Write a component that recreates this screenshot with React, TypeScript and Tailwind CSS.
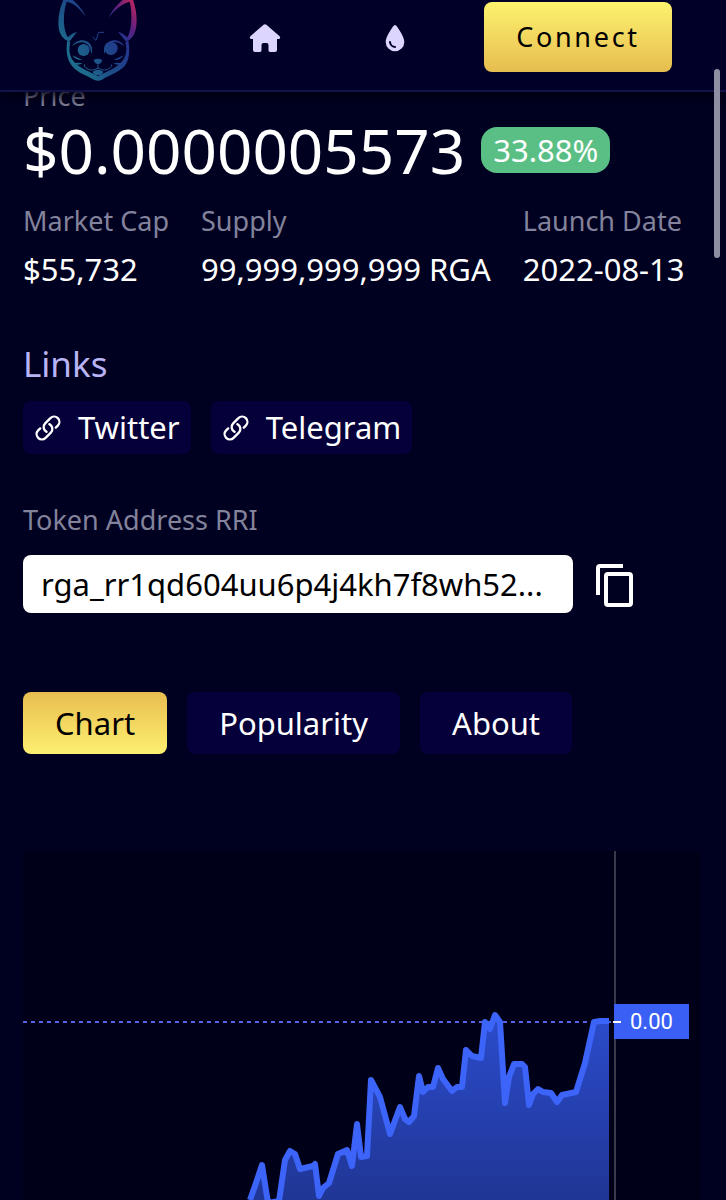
import { useState } from 'react'
import { HiOutlineLink } from 'react-icons/hi2'
import { IoWater } from 'react-icons/io5'

const stats = [
  { label: 'Market Cap', value: '$55,732' },
  { label: 'Supply', value: '99,999,999,999 RGA' },
  { label: 'Launch Date', value: '2022-08-13' },
]

const links = ['Twitter', 'Telegram']
const tabs = ['Chart', 'Popularity', 'About']

// x, y inside the 677 x 349 chart
const points = [
  [227, 349], [233, 332], [239, 314], [245, 352], [256, 350], [262, 309], [267, 300], [272, 303],
  [277, 318], [290, 315], [292, 313], [296, 345], [300, 337], [306, 332], [315, 303], [324, 299],
  [329, 315], [334, 273], [338, 306], [344, 305], [348, 229], [357, 246], [367, 283], [377, 256],
  [382, 268], [386, 271], [391, 265], [396, 225], [400, 241], [405, 236], [410, 236], [415, 217],
  [420, 228], [429, 240], [434, 236], [439, 236], [443, 199], [449, 205], [458, 207], [462, 171],
  [467, 178], [472, 164], [477, 171], [482, 252], [486, 226], [491, 213], [499, 213], [502, 216],
  [506, 254], [510, 243], [515, 238], [520, 241], [528, 242], [534, 251], [539, 244], [553, 241],
  [562, 212], [571, 171], [577, 170], [586, 170],
]

const linePoints = points.map((p) => p.join(',')).join(' ')

export default function App() {
  const [tab, setTab] = useState('Chart')

  return (
    <div className="relative min-h-screen overflow-hidden bg-[#000021] font-['Noto_Sans','Open_Sans',sans-serif] text-white">
      <Header />

      <main className="-mt-3.5 pr-[26px] pl-[23px]">
        <p className="text-[27px] leading-9 text-[#83839b]">Price</p>
        <div className="flex items-center gap-4">
          <h1 className="text-[62px] leading-[72px]">$0.0000005573</h1>
          <span className="rounded-2xl bg-[#5abf85] px-3 text-[31px] leading-[46px]">33.88%</span>
        </div>

        <dl className="mt-[17px] flex gap-8 whitespace-nowrap">
          {stats.map((s) => (
            <div key={s.label}>
              <dt className="text-[27px] leading-9 text-[#83839b]">{s.label}</dt>
              <dd className="mt-2.5 text-[31px] leading-10">{s.value}</dd>
            </div>
          ))}
        </dl>

        <h2 className="mt-[51px] text-[35px] leading-12 text-[#b8b4f5]">Links</h2>
        <div className="mt-[13px] flex gap-5">
          {links.map((name) => (
            <a
              key={name}
              href={`#${name.toLowerCase()}`}
              className="flex items-center gap-4 rounded-lg bg-[#05003a] px-[11px] text-[31px] leading-[53px]"
            >
              <HiOutlineLink size={28} strokeWidth={2} />
              {name}
            </a>
          ))}
        </div>

        <label htmlFor="rri" className="mt-12 block text-[27px] leading-9 text-[#83839b]">
          Token Address RRI
        </label>
        <div className="mt-[17px] flex items-center gap-5">
          <input
            id="rri"
            readOnly
            value="rga_rr1qd604uu6p4j4kh7f8wh52..."
            className="h-[58px] w-[550px] rounded-lg bg-white px-[18px] text-[31px] text-black"
          />
          <button type="button" aria-label="Copy address">
            <CopyIcon />
          </button>
        </div>

        <div className="mt-[79px] flex gap-5">
          {tabs.map((name) => (
            <button
              key={name}
              type="button"
              onClick={() => setTab(name)}
              className={
                name === tab
                  ? 'rounded-lg bg-gradient-to-b from-[#e8bd50] to-[#fdf070] px-8 text-[31px] leading-[62px] text-black'
                  : 'rounded-lg bg-[#05003a] px-8 text-[31px] leading-[62px]'
              }
            >
              {name}
            </button>
          ))}
        </div>

        <PriceChart />
      </main>

      <div className="absolute top-[69px] right-[6px] z-20 h-[189px] w-[6px] rounded-full bg-[#8f8fa3]" />
    </div>
  )
}

function Header() {
  return (
    <header className="relative z-10 flex h-[92px] items-start border-b-2 border-[#12124a] bg-[#000028] pl-[58px] shadow-[0_4px_12px_#000010]">
      <CatLogo />
      <nav className="ml-[62px] flex">
        <a href="#home" aria-label="Home" className="flex h-[76px] w-[130px] items-center justify-center text-[#dcd6ff]">
          <svg width="32" height="28" viewBox="0 0 32 28" fill="currentColor">
            <path d="M14.6 0.7Q16 -0.4 17.4 0.7L30.6 12.2Q32 14.5 30 15H28V26Q28 28 26 28H21Q19.5 28 19.5 26V21Q19.5 19 17.5 19H14.5Q12.5 19 12.5 21V26Q12.5 28 11 28H6Q4 28 4 26V15H2Q0 14.5 1.4 12.2Z" />
          </svg>
        </a>
        <a href="#faucet" aria-label="Faucet" className="flex h-[76px] w-[130px] items-center justify-center text-[#dcd6ff]">
          <svg width="20" height="28" viewBox="0 0 20 28">
            <path d="M10 1Q11 1 12 2.6C15.5 8 19.3 13.6 19.3 18A9.3 9.3 0 0 1 0.7 18C0.700 13.600 4.500 8 8 2.600Q9 1 10 1Z" fill="currentColor" />
            <path d="M5 18Q5.500 22.500 10 23" fill="none" stroke="#000028" strokeWidth="2" strokeLinecap="round" />
          </svg>
        </a>
      </nav>
      <button
        type="button"
        className="mt-[2px] ml-6 h-[70px] w-[188px] rounded-lg bg-gradient-to-b from-[#fdf26e] to-[#e6bd50] text-[27px] tracking-widest text-black"
      >
        Connect
      </button>
    </header>
  )
}

function CopyIcon() {
  return (
    <svg width="44" height="48" viewBox="0 0 44 48" fill="none" stroke="white" strokeWidth="4">
      <path d="M5 35V8Q5 6 7 6H30" />
      <rect x="13" y="14" width="25" height="31" rx="2" />
    </svg>
  )
}

function CatLogo() {
  return (
    <svg width="80" height="82" viewBox="54 0 240 246" fill="none" aria-label="Cat logo">
      <defs>
        <linearGradient id="cat" gradientUnits="userSpaceOnUse" x1="90" y1="160" x2="300" y2="10">
          <stop offset="0" stopColor="#1d6c8c" />
          <stop offset="0.3" stopColor="#1c4a88" />
          <stop offset="0.6" stopColor="#24348c" />
          <stop offset="0.75" stopColor="#5a2080" />
          <stop offset="0.95" stopColor="#b82560" />
        </linearGradient>
      </defs>
      <g fill="url(#cat)">
        <path d="M72 -6C56 30 50 72 60 98C67 115 79 122 89 124L111 96C97 99 88 108 84 112C69 91 68 40 80 5C104 10 122 28 139 53C125 23 103 0 83 -10Z" />
        <path d="M277 -6C291 30 294 72 284 98C277 115 266 122 257 124L234 95C249 99 257 108 262 112C275 91 278 40 269 5C245 12 225 28 206 53C220 23 244 0 265 -10Z" />
        <path d="M82 121L91 127C86 149 88 170 101 184C119 205 150 216 174 228C198 216 229 205 246 184C259 170 262 149 256 127L265 121C271 151 268 181 254 198C233 221 204 226 186 239Q174 245 162 239C140 226 114 220 96 198C80 178 77 150 82 121Z" />
        <circle cx="131" cy="150" r="18" />
        <circle cx="213" cy="145" r="20" />
        <path d="M97 138C106 121 132 114 148 129C158 139 158 153 154 163C153 147 148 133 134 128C120 125 107 130 97 138Z" />
        <path d="M253 138C244 121 218 114 202 129C192 139 190 153 194 163C195 147 202 133 216 126C230 125 243 130 253 138Z" />
        <path d="M161 180Q174 173 187 180Q185 190 174 193Q163 190 161 180Z" />
        <path d="M158 215Q174 204 190 215Q188 225 174 225Q160 225 158 215Z" />
        <path d="M97 166Q110 172 127 180Q107 182 97 166ZM101 190Q113 186 128 190Q113 198 101 190ZM251 166Q238 172 221 180Q241 182 251 166ZM247 190Q235 186 220 190Q235 198 247 190Z" />
      </g>
      <g stroke="url(#cat)" strokeWidth="3">
        <path d="M158 111L168 121L176 97H192" />
        <path d="M174 193V204Q153 217 137 203Q130 199 134 193M174 204Q195 217 211 203Q218 199 214 193" />
      </g>
    </svg>
  )
}

function PriceChart() {
  return (
    <svg
      className="mt-[97px] block w-full bg-[#000018]"
      viewBox="0 0 677 349"
      role="img"
      aria-label="Price chart"
    >
      <defs>
        <linearGradient id="area" gradientUnits="userSpaceOnUse" x1="0" y1="165" x2="0" y2="349">
          <stop offset="0" stopColor="#2b4bcb" />
          <stop offset="1" stopColor="#203695" />
        </linearGradient>
      </defs>
      <path d="M0 171H591" stroke="#5461e0" strokeWidth="2" strokeDasharray="4 4" />
      <polygon points={`${linePoints} 586,349 227,349`} fill="url(#area)" />
      <polyline points={linePoints} fill="none" stroke="#3c64f8" strokeWidth="6" strokeLinejoin="round" />
      <path d="M592 0V349" stroke="#3a3a4c" strokeWidth="2" />
      <rect x="591" y="153" width="75" height="35" fill="#3a5ff5" />
      <path d="M590 171H598" stroke="white" strokeWidth="2" />
      <text x="607" y="178" fontSize="22" fill="white" className="font-[Roboto,sans-serif]">
        0.00
      </text>
    </svg>
  )
}
